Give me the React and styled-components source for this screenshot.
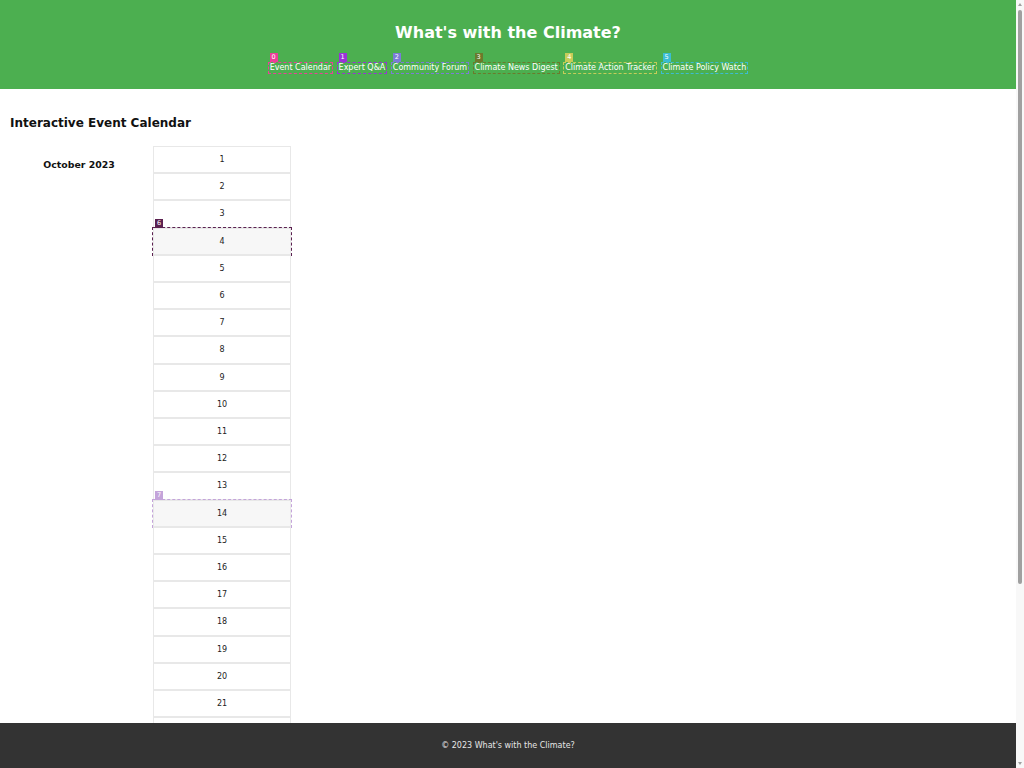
import React from "react";
import styled, { createGlobalStyle } from "styled-components";

const Global = createGlobalStyle`
  html, body { margin: 0; padding: 0; }
  html { scrollbar-width: none; }
  ::-webkit-scrollbar { display: none; }
  body {
    font-family: "DejaVu Sans", Verdana, sans-serif;
    background: #ffffff;
    color: #111;
    padding-right: 8px;
  }
`;

const Header = styled.header`
  background: #4caf50;
  color: #fff;
  display: flex;
  flex-direction: column;
  align-items: center;
  padding: 23px 0 16px;
`;

const Title = styled.h1`
  margin: 0;
  font-size: 16px;
  font-weight: bold;
  line-height: 19px;
`;

const Nav = styled.nav`
  display: flex;
  gap: 5.5px;
  margin-top: 21px;
`;

const Tagged = styled.span`
  position: relative;
  outline: 1px dashed ${(p) => p.$c};
`;

const Badge = styled.span`
  position: absolute;
  top: -10px;
  left: 1px;
  min-width: 8px;
  height: 9px;
  padding: 0 1px;
  box-sizing: border-box;
  background: ${(p) => p.$c};
  color: #fff;
  font-size: 6.5px;
  line-height: 9px;
  text-align: center;
`;

const NavLink = styled.a`
  display: block;
  color: #fff;
  text-decoration: none;
  font-size: 8px;
  line-height: 10px;
  padding: 0 1px;
`;

const Main = styled.main`
  padding: 16px 10px 40px;
`;

const Heading = styled.h2`
  margin: 11px 0 16px;
  font-size: 12px;
  line-height: 14px;
  font-weight: bold;
`;

const Calendar = styled.div`
  display: flex;
  gap: 5px;
  align-items: flex-start;
`;

const Month = styled.h3`
  width: 138px;
  margin: 13px 0 0;
  text-align: center;
  font-size: 9.4px;
  line-height: 11px;
  font-weight: bold;
`;

const Days = styled.div`
  display: flex;
  flex-direction: column;
  width: 138px;
`;

const Day = styled.div`
  position: relative;
  box-sizing: border-box;
  border: 1px solid #e8e8e8;
  background: ${(p) => (p.$tag ? "#f7f7f7" : "#fff")};
  padding: 8px 0;
  text-align: center;
  font-size: 8px;
  line-height: 9.2px;
  color: #222;
  outline: ${(p) => (p.$tag ? `1px dashed ${p.$tag}` : "none")};
`;

const Footer = styled.footer`
  position: fixed;
  left: 0;
  right: 8px;
  bottom: 0;
  height: 45px;
  background: #333;
  color: #e6e6e6;
  font-size: 8px;
  display: flex;
  align-items: center;
  justify-content: center;
`;

const ScrollTrack = styled.div`
  position: fixed;
  top: 0;
  right: 0;
  bottom: 0;
  width: 8px;
  background: #f8f8f8;
  display: flex;
  flex-direction: column;
  align-items: center;
  justify-content: space-between;
  padding: 3px 0;
  box-sizing: border-box;
`;

const Arrow = styled.span`
  width: 0;
  height: 0;
  border-left: 2.5px solid transparent;
  border-right: 2.5px solid transparent;
  ${(p) => (p.$down ? "border-top: 3px solid #a0a0a0;" : "border-bottom: 3px solid #a0a0a0;")}
`;

const Thumb = styled.span`
  position: absolute;
  top: 10px;
  left: 2px;
  width: 4px;
  height: 574px;
  border-radius: 2px;
  background: #a0a0a0;
`;

const links = [
  ["Event Calendar", "#ec3f98"],
  ["Expert Q&A", "#9a32d8"],
  ["Community Forum", "#7b7bd8"],
  ["Climate News Digest", "#6b7a2c"],
  ["Climate Action Tracker", "#c6cc58"],
  ["Climate Policy Watch", "#3bbdd2"],
];

const tagged = { 4: ["6", "#5b2150"], 14: ["7", "#c4a4da"] };

export default function App() {
  const days = Array.from({ length: 31 }, (_, i) => i + 1);
  return (
    <>
      <Global />
      <Header>
        <Title>What's with the Climate?</Title>
        <Nav>
          {links.map(([label, c], i) => (
            <Tagged key={label} $c={c}>
              <Badge $c={c}>{i}</Badge>
              <NavLink href="#">{label}</NavLink>
            </Tagged>
          ))}
        </Nav>
      </Header>
      <Main>
        <Heading>Interactive Event Calendar</Heading>
        <Calendar>
          <Month>October 2023</Month>
          <Days>
            {days.map((d) => {
              const t = tagged[d];
              return (
                <Day key={d} $tag={t ? t[1] : null}>
                  {t && <Badge $c={t[1]}>{t[0]}</Badge>}
                  {d}
                </Day>
              );
            })}
          </Days>
        </Calendar>
      </Main>
      <Footer>© 2023 What's with the Climate?</Footer>
      <ScrollTrack>
        <Arrow />
        <Thumb />
        <Arrow $down />
      </ScrollTrack>
    </>
  );
}
